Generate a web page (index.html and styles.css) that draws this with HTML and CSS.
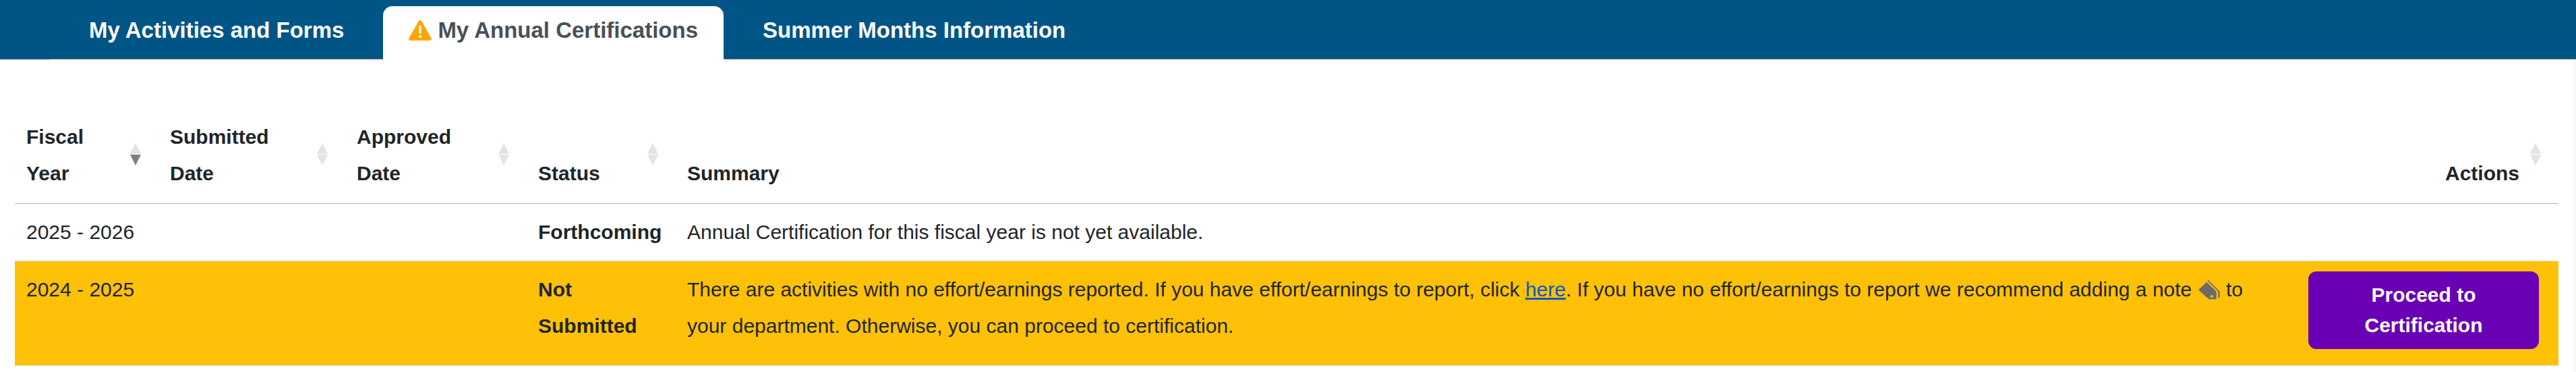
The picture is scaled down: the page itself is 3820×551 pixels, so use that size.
FILE: index.html
```
<!DOCTYPE html>
<html lang="en">
<head>
<meta charset="utf-8">
<title>My Annual Certifications</title>
<link rel="stylesheet" href="styles.css">
</head>
<body>
<header class="tabbar">
  <nav class="tabs">
    <a class="tab">My Activities and Forms</a>
    <a class="tab active"><svg class="warn" viewBox="0 0 34 30"><path d="M17 0a2.600 2.600 0 0 1 2.200 1.300l14.300 25.200a2.300 2.300 0 0 1-2 3.500H2.500a2.300 2.300 0 0 1-2-3.500L14.800 1.300A2.600 2.600 0 0 1 17 0z" fill="#ffa500"/><path d="M15.100 8h3.800l-.6 12h-2.600z" fill="#fff"/><circle cx="17" cy="24" r="2.100" fill="#fff"/></svg>My Annual Certifications</a>
    <a class="tab">Summer Months Information</a>
  </nav>
</header>
<main class="content">
  <table class="certs">
    <colgroup>
      <col class="c1"><col class="c2"><col class="c3"><col class="c4"><col class="c5"><col class="c6">
    </colgroup>
    <thead>
      <tr>
        <th class="sortable desc">Fiscal<br>Year</th>
        <th class="sortable">Submitted<br>Date</th>
        <th class="sortable">Approved<br>Date</th>
        <th class="sortable">Status</th>
        <th>Summary</th>
        <th class="sortable right">Actions</th>
      </tr>
    </thead>
    <tbody>
      <tr>
        <td>2025 - 2026</td>
        <td></td>
        <td></td>
        <td class="strong">Forthcoming</td>
        <td>Annual Certification for this fiscal year is not yet available.</td>
        <td></td>
      </tr>
      <tr class="warnrow">
        <td>2024 - 2025</td>
        <td></td>
        <td></td>
        <td class="strong">Not Submitted</td>
        <td>There are activities with no effort/earnings reported. If you have effort/earnings to report, click <a class="link">here</a>. If you have no effort/earnings to report we recommend adding a note <svg class="tag" viewBox="0 0 96 87"><path d="M0 43 37 8 80 50V85H47z" fill="#6b6b6b"/><path d="M45 0 95 50V77H88V50L44 6 39 3z" fill="#6b6b6b"/><circle cx="60" cy="72" r="6" fill="#ffc107"/></svg> to your department. Otherwise, you can proceed to certification.</td>
        <td class="actions"><button class="proceed">Proceed to Certification</button></td>
      </tr>
    </tbody>
  </table>
</main>
</body>
</html>
```
FILE: styles.css
```
* { box-sizing: border-box; }
html, body { margin: 0; }
body {
  font-family: "Liberation Sans", Arial, sans-serif;
  font-size: 30px;
  line-height: 54px;
  color: #212529;
  background: #fff;
  overflow: hidden;
}
.tabbar {
  height: 88px;
  padding: 9px 0 0 74px;
  background: #005587;
}
.tabs {
  display: flex;
  height: 79px;
  border-bottom: 1px solid #5f6b73;
}
.tab {
  display: flex;
  align-items: center;
  height: 79px;
  padding: 0 38px 9px;
  margin: 0 0 0 20px;
  font-size: 33px;
  font-weight: 700;
  line-height: 45px;
  color: #fff;
  white-space: nowrap;
}
.tab:first-child { margin: 0 20px; }
.tab.active {
  margin: 0;
  background: #fff;
  color: #495057;
  border-radius: 14px 14px 0 0;
  border-top: 1px solid #dee2e6;
}
.warn { width: 34px; height: 30px; margin-right: 9px; }
.content {
  height: 463px;
  padding: 87px 0 0 22px;
  border-right: 4px solid #f7f7f7;
}
.certs {
  table-layout: fixed;
  border-collapse: collapse;
  width: 3772px;
}
.c1 { width: 213px; }
.c2 { width: 277px; }
.c3 { width: 269px; }
.c4 { width: 221px; }
.c6 { width: 389px; }
th, td { padding: 15px 17px; vertical-align: top; text-align: left; }
th {
  position: relative;
  height: 126px;
  padding-top: 0;
  padding-bottom: 17px;
  vertical-align: bottom;
  font-weight: 700;
  border-bottom: 1px solid #b3b3b3;
}
td { border-bottom: 1px solid #dee2e6; }
th.right { text-align: right; padding-right: 58px; }
.strong { font-weight: 700; }
.warnrow td { background: #ffc107; }
.link { color: #0a58ca; text-decoration: underline; }
.tag { width: 32px; height: 29px; vertical-align: -5px; margin: 0 1px; }
.sortable::before, .sortable::after {
  content: "";
  position: absolute;
  right: 26px;
  width: 0;
  height: 0;
  border-left: 8px solid transparent;
  border-right: 8px solid transparent;
}
.sortable::before { top: 37px; border-bottom: 16px solid #e2e4e4; }
.sortable::after { top: 54px; border-top: 16px solid #e2e4e4; }
.sortable.desc::after { border-top-color: #7f7f83; }
.warnrow .actions { padding: 15px 29px 24px 18px; }
.proceed {
  display: block;
  width: 342px;
  height: 115px;
  padding: 12px;
  border: 0;
  border-radius: 12px;
  background: #6a00b4;
  color: #fff;
  font: 700 30px/45px "Liberation Sans", Arial, sans-serif;
  text-align: center;
}
```
